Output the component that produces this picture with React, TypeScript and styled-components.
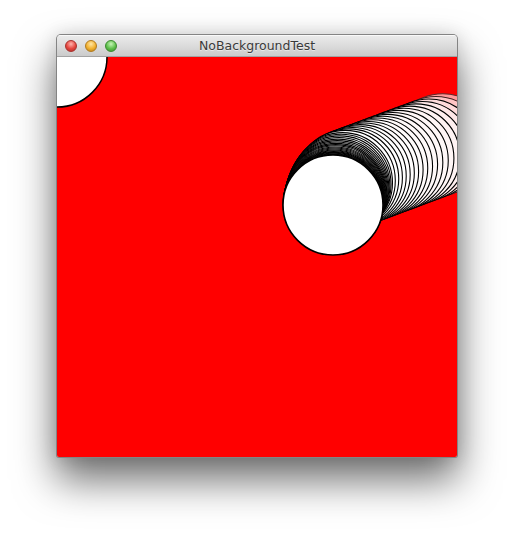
import React from "react";
import styled, { createGlobalStyle } from "styled-components";

const GlobalStyle = createGlobalStyle`
  html, body { margin: 0; padding: 0; background: #ffffff; }
  body { font-family: "DejaVu Sans", "Liberation Sans", sans-serif; }
`;

const Page = styled.div`
  width: 514px;
  height: 536px;
  box-sizing: border-box;
  padding: 34px 0 0 56px;
  background: #ffffff;
  overflow: hidden;
`;

const Window = styled.div`
  width: 400px;
  border: 1px solid rgba(0, 0, 0, 0.38);
  border-radius: 5px 5px 3px 3px;
  overflow: hidden;
  box-shadow: 0 22px 40px rgba(0, 0, 0, 0.57), 0 0 18px rgba(0, 0, 0, 0.12);
  background: #d6d6d6;
`;

const TitleBar = styled.div`
  height: 22px;
  display: grid;
  grid-template-columns: 1fr auto 1fr;
  align-items: center;
  background: linear-gradient(to bottom, #ececec 0%, #dcdcdc 50%, #cbcbcb 100%);
  border-bottom: 1px solid #a3a3a3;
  box-sizing: border-box;
  box-shadow: inset 0 1px 0 rgba(255, 255, 255, 0.7);
`;

const Lights = styled.div`
  display: flex;
  gap: 8px;
  padding-left: 8px;
  align-items: center;
`;

const Light = styled.span<{ $base: string; $dark: string; $hi: string }>`
  width: 12px;
  height: 12px;
  border-radius: 50%;
  box-sizing: border-box;
  border: 1px solid ${(p) => p.$dark};
  background: radial-gradient(circle at 50% 30%, ${(p) => p.$hi} 0%, ${(p) => p.$base} 55%, ${(p) => p.$dark} 100%);
`;

const Title = styled.div`
  font-family: "DejaVu Sans", "Liberation Sans", sans-serif;
  font-size: 12.5px;
  color: #3a3a3a;
  text-shadow: 0 1px 0 rgba(255, 255, 255, 0.5);
  white-space: nowrap;
`;

const Canvas = styled.svg`
  display: block;
  width: 400px;
  height: 400px;
`;

type Pt = { x: number; y: number };

const main: Pt = { x: 276, y: 148 };
const ctrl: Pt = { x: 280, y: 127 };
const join: Pt = { x: 290, y: 122.5 };
const far: Pt = { x: 392, y: 84.5 };

// dense polyline of the mouse path: a curve from the main circle, then a straight run
const path: Pt[] = [];
for (let i = 0; i <= 120; i++) {
  const t = i / 120;
  const a = (1 - t) * (1 - t);
  const b = 2 * (1 - t) * t;
  const c = t * t;
  path.push({
    x: a * main.x + b * ctrl.x + c * join.x,
    y: a * main.y + b * ctrl.y + c * join.y,
  });
}
for (let i = 1; i <= 200; i++) {
  const t = i / 200;
  path.push({ x: join.x + (far.x - join.x) * t, y: join.y + (far.y - join.y) * t });
}

const cum: number[] = [0];
for (let i = 1; i < path.length; i++) {
  cum.push(cum[i - 1] + Math.hypot(path[i].x - path[i - 1].x, path[i].y - path[i - 1].y));
}
const total = cum[cum.length - 1];

const pointAt = (s: number): Pt => {
  let i = 1;
  while (i < cum.length - 1 && cum[i] < s) i++;
  const seg = cum[i] - cum[i - 1] || 1;
  const t = Math.min(1, Math.max(0, (s - cum[i - 1]) / seg));
  return {
    x: path[i - 1].x + (path[i].x - path[i - 1].x) * t,
    y: path[i - 1].y + (path[i].y - path[i - 1].y) * t,
  };
};

const dists: number[] = [];
{
  let s = 0.6;
  while (s <= total) {
    dists.push(s);
    s += s < 24 ? 0.6 + 0.07 * s : Math.min(7.5, 3.6 + 0.04 * (s - 24));
  }
}

const trail = dists
  .slice()
  .reverse()
  .map((s, j) => {
    const p = pointAt(s);
    const pink = 90 * Math.exp(-j / 1.6) + 12 * Math.max(0, 1 - j / 16);
    const g = Math.round(255 - pink);
    const stroke = j === 0 ? "#5e2c2c" : j === 1 ? "#3c1c1c" : "#000000";
    return { x: p.x, y: p.y, fill: `rgb(255,${g},${g})`, stroke, j };
  });

export default function App() {
  return (
    <>
      <GlobalStyle />
      <Page>
        <Window>
          <TitleBar>
            <Lights>
              <Light $base="#e5453d" $dark="#a8302b" $hi="#ffb3ad" />
              <Light $base="#f2b12e" $dark="#b27a1c" $hi="#ffe6a6" />
              <Light $base="#5dc04a" $dark="#3a8a2e" $hi="#c6f4b6" />
            </Lights>
            <Title>NoBackgroundTest</Title>
            <span />
          </TitleBar>
          <Canvas viewBox="0 0 400 400">
            <rect x="0" y="0" width="400" height="400" fill="#ff0000" />
            <circle cx="0" cy="0" r="50" fill="#ffffff" stroke="#000" strokeWidth="1.5" />
            {trail.map((c) => (
              <circle
                key={c.j}
                cx={c.x}
                cy={c.y}
                r="50"
                fill={c.fill}
                stroke={c.stroke}
                strokeWidth="1.1"
              />
            ))}
            <circle cx={main.x} cy={main.y} r="50" fill="#ffffff" stroke="#000" strokeWidth="1.6" />
          </Canvas>
        </Window>
      </Page>
    </>
  );
}
